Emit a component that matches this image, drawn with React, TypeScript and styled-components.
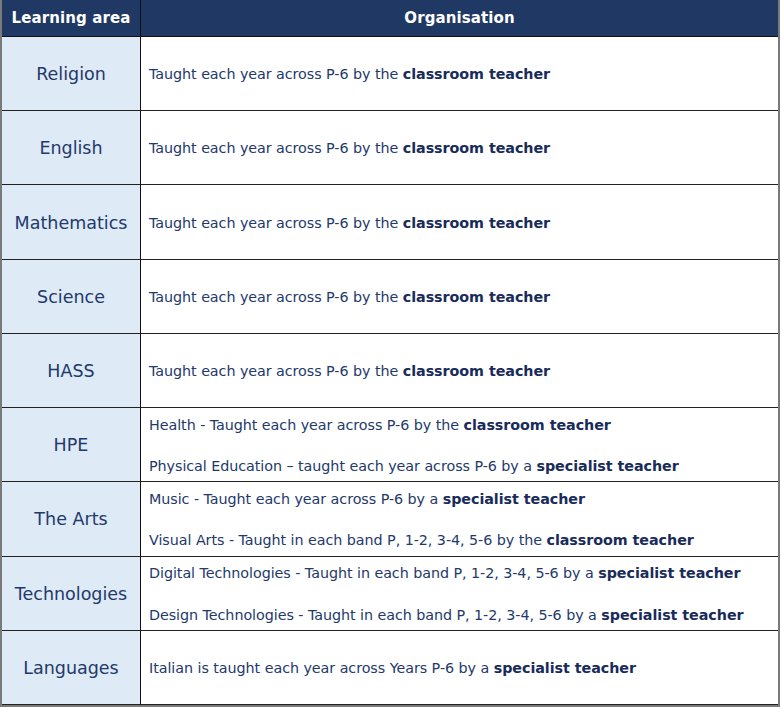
import React from "react";
import styled, { createGlobalStyle } from "styled-components";

const Global = createGlobalStyle`
  html, body { margin: 0; padding: 0; background: #ffffff; }
  body { font-family: "DejaVu Sans", "Liberation Sans", sans-serif; }
`;

const Table = styled.div`
  width: 780px;
  height: 707px;
  box-sizing: border-box;
  border-left: 2px solid #7a7a7a;
  border-right: 2px solid #7a7a7a;
  border-bottom: 2px solid #7a7a7a;
  display: grid;
  grid-template-columns: 139px 1fr;
  grid-template-rows: 37px repeat(9, 1fr);
  background: #ffffff;
`;

const HeadCell = styled.div<{ $first?: boolean }>`
  background: #1f3864;
  color: #ffffff;
  font-family: "DejaVu Sans", sans-serif;
  font-weight: bold;
  font-size: 15px;
  letter-spacing: 0.1px;
  display: flex;
  align-items: center;
  justify-content: center;
  padding-bottom: 1px;
  box-sizing: border-box;
  border-bottom: 1px solid #111;
  border-right: ${(p) => (p.$first ? "1px solid #111" : "none")};
`;

const AreaCell = styled.div`
  background: #deeaf6;
  color: #23396b;
  font-size: 17.5px;
  display: flex;
  align-items: center;
  justify-content: center;
  border-right: 1px solid #111;
  border-bottom: 1px solid #222;
  box-sizing: border-box;
  padding-top: 1px;
`;

const OrgCell = styled.div`
  color: #23396b;
  font-size: 14.3px;
  line-height: 20.7px;
  letter-spacing: -0.05px;
  display: flex;
  flex-direction: column;
  justify-content: center;
  padding: 2px 0 0 8px;
  border-bottom: 1px solid #222;
  box-sizing: border-box;
  white-space: nowrap;
`;

const Line = styled.div<{ $gap?: boolean }>`
  margin-top: ${(p) => (p.$gap ? "20.7px" : "0")};
`;

const Strong = styled.b`
  color: #182b5a;
  font-weight: bold;
`;

type Part = { text: string; strong: string };
type Row = { area: string; lines: Part[] };

const cls = "classroom teacher";
const spec = "specialist teacher";
const std: Part = { text: "Taught each year across P-6 by the ", strong: cls };

const rows: Row[] = [
  { area: "Religion", lines: [std] },
  { area: "English", lines: [std] },
  { area: "Mathematics", lines: [std] },
  { area: "Science", lines: [std] },
  { area: "HASS", lines: [std] },
  {
    area: "HPE",
    lines: [
      { text: "Health - Taught each year across P-6 by the ", strong: cls },
      { text: "Physical Education \u2013 taught each year across P-6 by a ", strong: spec },
    ],
  },
  {
    area: "The Arts",
    lines: [
      { text: "Music - Taught each year across P-6 by a ", strong: spec },
      { text: "Visual Arts - Taught in each band P, 1-2, 3-4, 5-6 by the ", strong: cls },
    ],
  },
  {
    area: "Technologies",
    lines: [
      { text: "Digital Technologies - Taught in each band P, 1-2, 3-4, 5-6 by a ", strong: spec },
      { text: "Design Technologies - Taught in each band P, 1-2, 3-4, 5-6 by a ", strong: spec },
    ],
  },
  {
    area: "Languages",
    lines: [{ text: "Italian is taught each year across Years P-6 by a ", strong: spec }],
  },
];

export default function App() {
  return (
    <>
      <Global />
      <Table>
        <HeadCell $first>Learning area</HeadCell>
        <HeadCell>Organisation</HeadCell>
        {rows.map((r) => (
          <React.Fragment key={r.area}>
            <AreaCell>{r.area}</AreaCell>
            <OrgCell>
              {r.lines.map((l, i) => (
                <Line key={i} $gap={i > 0}>
                  {l.text}
                  <Strong>{l.strong}</Strong>
                </Line>
              ))}
            </OrgCell>
          </React.Fragment>
        ))}
      </Table>
    </>
  );
}
